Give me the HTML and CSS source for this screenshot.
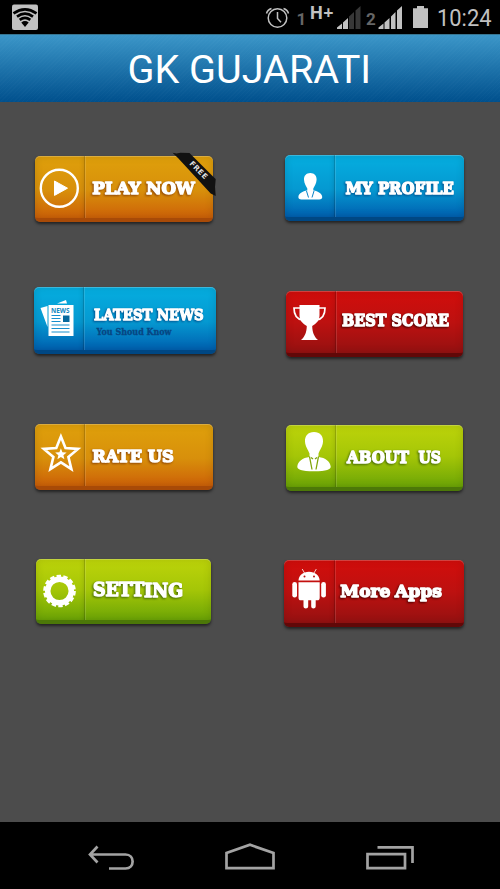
FILE: index.html
```html
<!DOCTYPE html>
<html lang="en">
<head>
<meta charset="utf-8">
<title>GK Gujarati</title>
<link rel="stylesheet" href="styles.css">
</head>
<body>
<div class="status">
  <svg viewBox="0 0 500 34" width="500" height="34">
    <rect x="12" y="4.500" width="26" height="25.500" rx="2" fill="#c1c1c1"/>
    <g fill="none" stroke="#000" stroke-width="2.700">
      <path d="M13.500 13.300Q25 5.300 36.500 13.300"/>
      <path d="M17 16.600Q25 10.800 33 16.600"/>
      <path d="M19.700 19.800Q25 15.800 30.300 19.800"/>
    </g>
    <path d="M21.300 22.400Q25 19.800 28.700 22.400L25 27z"/>
    <g fill="none" stroke="#c1c1c1" stroke-width="1.500">
      <circle cx="277.500" cy="18" r="9.300"/>
      <path d="M277.500 12v6.500l3.500 3.700M266.500 13.500q1-3.800 5-5M288.500 13.500q-1-3.800-5-5"/>
    </g>
    <text class="sim" x="296.500" y="25" textLength="8">1</text>
    <text class="hspa" x="309.500" y="18.700" textLength="24" lengthAdjust="spacingAndGlyphs">H+</text>
    <path fill="#c1c1c1" d="M337 29v-1.500l5-4V29zM343 29v-6.500l5-4.500v11z"/>
    <path fill="#373737" d="M349 29V16.500l5-4.500v17zM355.500 29V10.500l5-4.500v23z"/>
    <text class="sim" x="366" y="25" textLength="10">2</text>
    <path fill="#c1c1c1" d="M378.500 29v-1.500l5-4V29zM384.500 29v-6.500l5-4.500v11zM391 29V16.500l4.500-4.500v17zM397 29V10.500l5-4.500v23zM413 8.300h4V6h7v2.300h4V28h-15z"/>
    <text class="clock" x="437" y="26" textLength="54.500" lengthAdjust="spacingAndGlyphs">10:24</text>
  </svg>
</div>
<header class="title">
  <svg viewBox="0 34 500 68" width="500" height="68"><text x="127.500" y="83" textLength="243.500" lengthAdjust="spacingAndGlyphs">GK GUJARATI</text></svg>
</header>
<main class="menu">
  <a class="btn orange play">
    <svg class="icon" viewBox="35 156 50 62">
      <circle cx="59.300" cy="188.300" r="18.500" fill="none" stroke="#fff" stroke-width="2.400"/>
      <path d="M54.500 181l13 7.200-13 7.200z" stroke="#fff" stroke-linejoin="round"/>
    </svg>
    <svg class="label" viewBox="85 156 128 62"><text x="92.300" y="194.200" textLength="102.500" lengthAdjust="spacingAndGlyphs">PLAY NOW</text></svg>
    <svg class="ribbon" viewBox="172 152 46 46">
      <path fill="#111" d="M172.500 152.700l4 .8 4-.8 9 .3 24.500 24.500 1.700 1.500-.7 8 .7 9-5-2.500L178 158z"/>
      <text transform="translate(198.500 170) rotate(45)" x="-11" y="2.500" textLength="22">FREE</text>
    </svg>
  </a>
  <a class="btn blue profile">
    <svg class="icon" viewBox="285 155 50 62">
      <path d="M310.300 173c4 0 6.500 2.800 6.300 6.700-.2 3.800-2.200 6.300-3.300 8.800v2c5 .8 8.500 3 8.900 6.200.2 1.700-1 2.800-3 2.800h-17.800c-2 0-3.200-1.100-3-2.800.4-3.200 3.900-5.400 8.900-6.200v-2c-1.100-2.500-3.100-5-3.300-8.800-.2-3.900 2.300-6.700 6.300-6.700z"/>
      <path fill="none" stroke="#0a83c8" d="M306.500 191l2 6.500M314 191l-2 6.500"/>
    </svg>
    <svg class="label" viewBox="335 155 128 62"><text x="345" y="193.500" textLength="108.500" lengthAdjust="spacingAndGlyphs">MY PROFILE</text></svg>
  </a>
  <a class="btn blue news">
    <svg class="icon" viewBox="34 287 50 63">
      <path d="M40.500 308l7-2v21zM57 303.500l9-3.500 1 3.500zM48.500 305h25v31h-25z"/>
      <text class="paper" x="51" y="312.500" textLength="18.500" lengthAdjust="spacingAndGlyphs">NEWS</text>
      <path stroke="#178fcd" d="M51.500 315.500h9M51.500 318.500h9M51.500 321.500h9M51.500 325h18M51.500 328.500h18M51.500 332h18"/>
      <path class="photo" d="M63 315.500h6.500v6.500H63z"/>
    </svg>
    <svg class="label" viewBox="84 287 131 63"><text class="shorter" x="93.600" y="320.300" textLength="109.500" lengthAdjust="spacingAndGlyphs">LATEST NEWS</text><text class="sub" x="96" y="335.300" textLength="75" lengthAdjust="spacingAndGlyphs">You Shoud Know</text></svg>
  </a>
  <a class="btn red score">
    <svg class="icon" viewBox="286 291 50 62">
      <path d="M299.500 305h20v10c0 5.500-3 8.500-7.300 11 .2 6 1.700 10.500 5.800 14h-17c4.100-3.500 5.600-8 5.800-14-4.300-2.500-7.300-5.500-7.300-11z"/>
      <path fill="none" stroke="#fff" stroke-width="1.700" d="M300 308h-6c0 7 2 11 8.500 12M319 308h6c0 7-2 11-8.500 12"/>
    </svg>
    <svg class="label" viewBox="336 291 127 62"><text x="342" y="326.200" textLength="107" lengthAdjust="spacingAndGlyphs">BEST SCORE</text></svg>
  </a>
  <a class="btn orange rate">
    <svg class="icon" viewBox="35 424 50 62">
      <path fill="none" stroke="#fff" stroke-width="2.600" d="M60.900 436.500l4.600 11.600 12.500.8-9.600 8 3 12.200-10.500-6.800-10.500 6.800 3-12.200-9.600-8 12.500-.8z"/>
      <path d="M60.900 448.300l1.500 3.900 4.200.3-3.200 2.700 1 4.100-3.500-2.300-3.500 2.300 1-4.100-3.200-2.700 4.200-.3z"/>
    </svg>
    <svg class="label" viewBox="85 424 128 62"><text x="92.300" y="462.200" textLength="81.500" lengthAdjust="spacingAndGlyphs">RATE US</text></svg>
  </a>
  <a class="btn green about">
    <svg class="icon" viewBox="286 425 50 62">
      <path d="M314 432c6 0 9.300 4 9 9.500-.3 5.300-3.200 8.300-4.500 12v3.500c7 .8 11.700 4.500 12.200 9.500.2 3-4 4.800-16.700 4.800s-16.900-1.800-16.700-4.800c.5-5 5.200-8.700 12.200-9.500v-3.500c-1.300-3.700-4.200-6.700-4.500-12-.3-5.500 3-9.500 9-9.500z"/>
      <path fill="none" stroke="#80a50b" stroke-width="1.300" d="M309.500 456.500l2.500 13M318.500 456.500l-2.500 13M311 457.500l2 1.500M317 457.500l-2 1.500"/>
    </svg>
    <svg class="label" viewBox="336 425 127 62"><text x="347" y="463.200" textLength="62" lengthAdjust="spacingAndGlyphs">ABOUT</text><text x="418.500" y="463.200" textLength="22.500" lengthAdjust="spacingAndGlyphs">US</text></svg>
  </a>
  <a class="btn green setting">
    <svg class="icon" viewBox="36 559 49 61">
      <circle cx="59.500" cy="591" r="11.800" fill="none" stroke="#fff" stroke-width="5.500"/>
      <circle cx="59.500" cy="591" r="14.500" fill="none" stroke="#fff" stroke-width="3.700" stroke-dasharray="4.300 2.207"/>
    </svg>
    <svg class="label" viewBox="85 559 126 61"><text class="taller" x="93" y="595.700" textLength="90" lengthAdjust="spacingAndGlyphs">SETT<tspan dy="1">ING</tspan></text></svg>
  </a>
  <a class="btn red more">
    <svg class="icon" viewBox="284 560 51 63">
      <path d="M298.500 580.500c.2-5 4.500-8.800 10.500-8.800s10.500 3.800 10.700 8.800zM298.500 582.200h21.200v15.500c0 1.700-.8 2.600-2.500 2.600h-1.500v6c0 3-4.500 3-4.500 0v-6h-3v6c0 3-4.700 3-4.700 0v-6h-2.500c-1.700 0-2.500-1-2.500-2.600z"/>
      <rect x="292.300" y="582" width="4.700" height="15.500" rx="2.300"/>
      <rect x="321.200" y="582" width="4.700" height="15.500" rx="2.300"/>
      <path fill="none" stroke="#fff" stroke-width=".8" d="M304.500 573l-2.300-4M314 573l2.300-4"/>
      <circle class="eye" cx="304.500" cy="576.500" r="1"/>
      <circle class="eye" cx="314" cy="576.500" r="1"/>
    </svg>
    <svg class="label" viewBox="335 560 129 63"><text x="340.300" y="596.500" textLength="50" lengthAdjust="spacingAndGlyphs">More</text><text x="395" y="596.500" textLength="47" lengthAdjust="spacingAndGlyphs">Apps</text></svg>
  </a>
</main>
<nav class="navbar">
  <svg viewBox="0 822 500 67" width="500" height="67" fill="none" stroke="#a3a3a3" stroke-width="2.700">
    <path d="M97.500 846.500l-7.500 8 7.500 8M90 854.500h35.500c9.500 0 9.500 14 0 14H109"/>
    <path d="M226.500 868.200V853l23.500-8.200 23.500 8.200v15.200z"/>
    <path d="M367.500 854.200h37.500v14h-37.500zM377.500 847.300h35V863"/>
  </svg>
</nav>
</body>
</html>
```
FILE: styles.css
```css
body {
  margin: 0;
  width: 500px;
  height: 889px;
  display: flex;
  flex-direction: column;
  overflow: hidden;
  background: #4c4c4c;
  font-family: Roboto, "Liberation Sans", sans-serif;
}
svg { display: block; }
.status { height: 34px; background: #000; }
.sim { font: bold 17px Roboto, sans-serif; fill: #666; }
.hspa { font: bold 18px "Open Sans", sans-serif; fill: #c1c1c1; }
.clock { font: 24px Roboto, sans-serif; fill: #c1c1c1; }
.title {
  height: 68px;
  background:
    repeating-linear-gradient(135deg, rgba(255,255,255,.015) 0 1px, transparent 1px 3px),
    linear-gradient(#3c97c9, #00508d);
  box-shadow: inset 0 1px #377591;
}
.title text { font-size: 39.5px; fill: #fff; }
.menu {
  flex: 1;
  display: grid;
  grid-template-columns: 250px 250px;
  grid-template-rows: 132px 137px 135px 70px;
  padding-top: 53px;
  box-sizing: border-box;
  align-items: start;
}
.btn {
  position: relative;
  display: flex;
  border-radius: 5px;
  box-sizing: border-box;
  border-bottom: 4px solid;
  box-shadow: inset 0 1px rgba(255,255,255,.22), inset 0 0 9px rgba(0,0,0,.13), 0 2px 3px rgba(0,0,0,.55);
}
.orange { background: linear-gradient(#dfa00b, #d8900b 55%, #cd6108); border-color: #a84a07; --shade: #8c4305; }
.blue { background: linear-gradient(#05aee0, #0599d1 55%, #0060b0); border-color: #004783; --shade: #00508e; }
.red { background: linear-gradient(#d20d0b, #bd1110 50%, #951111); border-color: #610808; --shade: #480000; }
.green { background: linear-gradient(#bdd40a, #a5c607 50%, #6ca506); border-color: #4c7808; --shade: #426705; }
.play { width: 178px; height: 66px; margin: 1px 0 0 35px; }
.profile { width: 179px; height: 66px; margin-left: 35px; }
.news { width: 182px; height: 67px; margin-left: 34px; }
.score { width: 177px; height: 66px; margin: 4px 0 0 36px; }
.rate { width: 178px; height: 66px; margin-left: 35px; }
.about { width: 177px; height: 66px; margin: 1px 0 0 36px; }
.setting { width: 175px; height: 65px; margin-left: 36px; }
.more { width: 180px; height: 67px; margin: 1px 0 0 34px; }
.icon {
  flex: none;
  width: 50px;
  height: 100%;
  fill: #fff;
  box-shadow: inset -1px 0 rgba(0,0,0,.13), inset -5px 0 5px -4px rgba(0,0,0,.15), 1px 0 rgba(255,255,255,.13);
}
.setting .icon { width: 49px; }
.more .icon { width: 51px; }
.label { flex: 1; min-width: 0; height: 100%; overflow: visible; }
.label text {
  font: bold 17px "DejaVu Serif", serif;
  fill: #fff;
  stroke: #fff;
  stroke-width: 1.5px;
  stroke-linejoin: round;
  filter: drop-shadow(-1px 1px 1px var(--shade));
}
.label .shorter { font-size: 15.3px; stroke-width: 1.3px; }
.label .taller { font-size: 18.5px; }
.label .sub { font-size: 8.7px; fill: #074682; stroke: #074682; stroke-width: .3px; filter: none; }
.icon .paper { font: bold 7px "Open Sans", sans-serif; fill: #1687c0; }
.icon .photo { fill: #07699e; }
.icon .eye { fill: #b31212; }
.ribbon { position: absolute; left: 137px; top: -4px; width: 46px; height: 46px; }
.ribbon text { font: bold 7.5px "DejaVu Sans", sans-serif; fill: #ddd; }
.navbar { height: 67px; background: #000; }
```
